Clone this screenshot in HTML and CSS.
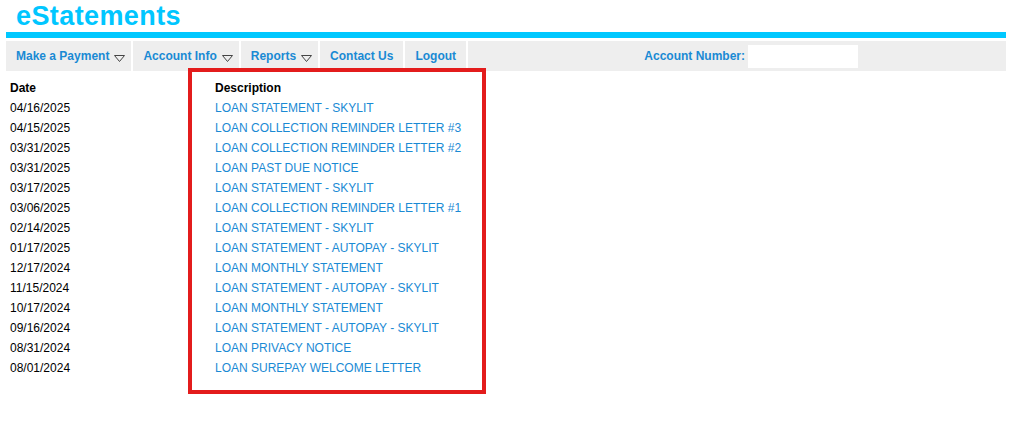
FILE: index.html
```html
<!DOCTYPE html>
<html>
<head>
<meta charset="utf-8">
<link rel="stylesheet" href="styles.css">
</head>
<body>
<div class="page">
  <h1 class="title">eStatements</h1>
  <div class="rule"></div>
  <nav class="nav">
    <a class="nav-item has-caret">Make a Payment <svg class="caret" width="11" height="7" viewBox="0 0 11 7"><path d="M0.5 0.5 H10.5 L5.5 6.5 Z" fill="none" stroke="#444" stroke-width="1"/></svg></a>
    <a class="nav-item has-caret">Account Info <svg class="caret" width="11" height="7" viewBox="0 0 11 7"><path d="M0.5 0.5 H10.5 L5.5 6.5 Z" fill="none" stroke="#444" stroke-width="1"/></svg></a>
    <a class="nav-item has-caret">Reports <svg class="caret" width="11" height="7" viewBox="0 0 11 7"><path d="M0.5 0.5 H10.5 L5.5 6.5 Z" fill="none" stroke="#444" stroke-width="1"/></svg></a>
    <a class="nav-item">Contact Us</a>
    <a class="nav-item">Logout</a>
    <div class="acct">
      <span class="acct-label">Account Number:</span>
      <span class="acct-input"></span>
    </div>
  </nav>
  <div class="list">
    <div class="head">Date</div><div class="head">Description</div>
    <div>04/16/2025</div><a class="desc">LOAN STATEMENT - SKYLIT</a>
    <div>04/15/2025</div><a class="desc">LOAN COLLECTION REMINDER LETTER #3</a>
    <div>03/31/2025</div><a class="desc">LOAN COLLECTION REMINDER LETTER #2</a>
    <div>03/31/2025</div><a class="desc">LOAN PAST DUE NOTICE</a>
    <div>03/17/2025</div><a class="desc">LOAN STATEMENT - SKYLIT</a>
    <div>03/06/2025</div><a class="desc">LOAN COLLECTION REMINDER LETTER #1</a>
    <div>02/14/2025</div><a class="desc">LOAN STATEMENT - SKYLIT</a>
    <div>01/17/2025</div><a class="desc">LOAN STATEMENT - AUTOPAY - SKYLIT</a>
    <div>12/17/2024</div><a class="desc">LOAN MONTHLY STATEMENT</a>
    <div>11/15/2024</div><a class="desc">LOAN STATEMENT - AUTOPAY - SKYLIT</a>
    <div>10/17/2024</div><a class="desc">LOAN MONTHLY STATEMENT</a>
    <div>09/16/2024</div><a class="desc">LOAN STATEMENT - AUTOPAY - SKYLIT</a>
    <div>08/31/2024</div><a class="desc">LOAN PRIVACY NOTICE</a>
    <div>08/01/2024</div><a class="desc">LOAN SUREPAY WELCOME LETTER</a>
  </div>
  <div class="highlight"></div>
</div>
</body>
</html>
```
FILE: styles.css
```css
html, body {
  margin: 0;
  padding: 0;
  background: #fff;
}
body {
  font-family: "Liberation Sans", Arial, sans-serif;
  font-size: 12px;
  color: #000;
}
.page {
  position: relative;
  width: 1014px;
  height: 445px;
}
.title {
  margin: 0;
  padding: 2px 0 0 16px;
  height: 29px;
  font-size: 27px;
  line-height: 29px;
  font-weight: bold;
  letter-spacing: 0.4px;
  color: #00c6ff;
}
.rule {
  margin: 1px 8px 0 6px;
  height: 6px;
  background: #00c8ff;
}
.nav {
  display: flex;
  align-items: stretch;
  margin: 3px 8px 0 6px;
  height: 30px;
  background: #eeeeee;
}
.nav-item {
  display: flex;
  align-items: center;
  gap: 5px;
  padding: 0 10px;
  border-right: 2px solid #fff;
  font-weight: bold;
  color: #1a8ad4;
  white-space: nowrap;
}
.nav-item.has-caret {
  padding-right: 6px;
}
.caret {
  margin-top: 5px;
}
.acct {
  display: flex;
  align-items: center;
  margin-left: auto;
  margin-right: 148px;
  gap: 3px;
}
.acct-label {
  font-weight: bold;
  color: #1a8ad4;
}
.acct-input {
  display: block;
  width: 110px;
  height: 23px;
  background: #fff;
}
.list {
  display: grid;
  grid-template-columns: 205px auto;
  grid-auto-rows: 20px;
  align-items: center;
  padding: 7px 0 0 10px;
}
.head {
  font-weight: bold;
}
.desc {
  color: #1a8ad4;
}
.highlight {
  position: absolute;
  left: 188px;
  top: 68px;
  width: 290px;
  height: 318px;
  border: 4px solid #e31c1c;
}
```
